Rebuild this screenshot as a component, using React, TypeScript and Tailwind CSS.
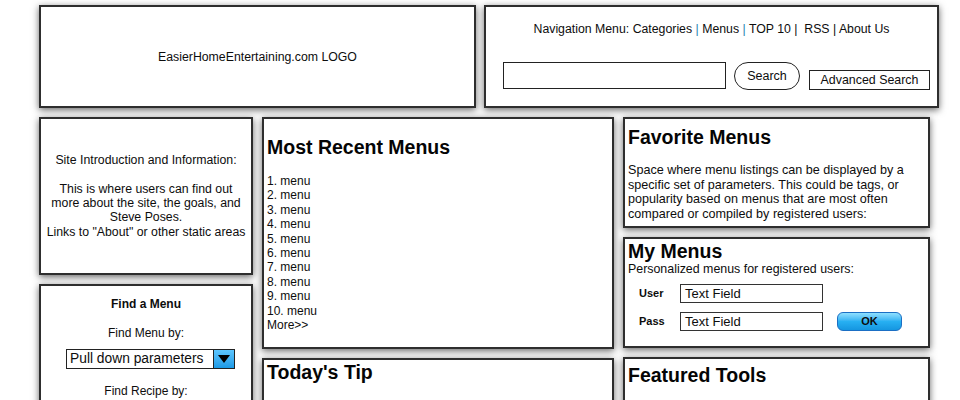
import React from "react";

const box =
  "bg-white border-2 border-[#2e2e2e] shadow-[0_2px_7px_rgba(0,0,0,0.6)]";

const heading = "font-bold text-[19.5px] leading-[20px] text-[#050505]";

export default function App() {
  const items = Array.from({ length: 10 }, (_, i) => `${i + 1}. menu`);
  return (
    <div
      className="w-[960px] h-[400px] overflow-hidden bg-white text-[#0d0d0d]"
      style={{ fontFamily: '"Liberation Sans", Arial, sans-serif' }}
    >
      <div className="pl-[39px] pt-[5px]">
        {/* Top row */}
        <div className="flex gap-[8px]">
          <div
            className={`${box} w-[437px] h-[103px] flex items-center justify-center text-[12.3px] pt-[1px]`}
          >
            EasierHomeEntertaining.com LOGO
          </div>
          <div className={`${box} w-[455px] h-[103px] flex flex-col`}>
            <div className="pt-[14px] text-[12.3px] leading-[16px] text-center">
              Navigation Menu: Categories{" "}
              <span className="text-[#2a7fb0]">|</span> Menus{" "}
              <span className="text-[#2a7fb0]">|</span> TOP 10 |&nbsp; RSS |
              About Us
            </div>
            <div className="flex items-start mt-[25px] pl-[17px]">
              <div className="w-[223px] h-[27px] border-[1.5px] border-[#222] bg-white" />
              <div className="ml-[8px] w-[66px] h-[28px] rounded-full border-[1.5px] border-[#222] flex items-center justify-center text-[12.5px]">
                Search
              </div>
              <div className="ml-[9px] mt-[8px] w-[121px] h-[20px] border-[1.5px] border-[#222] flex items-center justify-center text-[12.4px]">
                Advanced Search
              </div>
            </div>
          </div>
        </div>

        {/* Main grid */}
        <div className="mt-[9px] grid grid-cols-[214px_352px_307px] gap-x-[9px] items-start">
          {/* Left column */}
          <div className="flex flex-col gap-[9px]">
            <div
              className={`${box} h-[158px] flex items-center justify-center text-center text-[12.3px] leading-[14.4px]`}
            >
              <div>
                Site Introduction and Information:
                <br />
                <br />
                This is where users can find out
                <br />
                more about the site, the goals, and
                <br />
                Steve Poses.
                <br />
                Links to "About" or other static areas
              </div>
            </div>
            <div className={`${box} h-[140px] pt-[11px] text-[12px] leading-[14.5px]`}>
              <div className="text-center font-bold">Find a Menu</div>
              <div className="text-center mt-[14.5px]">Find Menu by:</div>
              <div className="mt-[8px] ml-[25px] w-[169px] h-[20px] border-[1.5px] border-[#222] flex items-stretch">
                <div className="flex-1 flex items-center pl-[3px] text-[13.8px] leading-none">
                  Pull down parameters
                </div>
                <div className="w-[21px] bg-gradient-to-b from-[#5cc6ff] to-[#1a9ae6] border-l-[1.5px] border-[#222] flex items-center justify-center">
                  <svg width="12" height="8" viewBox="0 0 12 8">
                    <polygon points="0,0 12,0 6,8" fill="#000" />
                  </svg>
                </div>
              </div>
              <div className="text-center mt-[15px]">Find Recipe by:</div>
            </div>
          </div>

          {/* Middle column */}
          <div className="flex flex-col gap-[9px]">
            <div className={`${box} h-[232px] pt-[18px] pl-[3px]`}>
              <div className={heading}>Most Recent Menus</div>
              <div className="mt-[17px] text-[12px] leading-[14.4px]">
                {items.map((t) => (
                  <div key={t}>{t}</div>
                ))}
                <div>More&gt;&gt;</div>
              </div>
            </div>
            <div className={`${box} h-[120px] pt-[2px] pl-[3px]`}>
              <div className={heading}>Today's Tip</div>
            </div>
          </div>

          {/* Right column */}
          <div className="flex flex-col gap-[9px]">
            <div className={`${box} h-[111px] pt-[8px] pl-[3px]`}>
              <div className={heading}>Favorite Menus</div>
              <div className="mt-[16px] text-[12.6px] leading-[14.6px]">
                Space where menu listings can be displayed by a
                <br />
                specific set of parameters. This could be tags, or
                <br />
                popularity based on menus that are most often
                <br />
                compared or compiled by registered users:
              </div>
            </div>
            <div className={`${box} h-[111px] pt-[2px] pl-[3px]`}>
              <div className={heading}>My Menus</div>
              <div className="mt-[1px] text-[12.4px] leading-[14.5px]">
                Personalized menus for registered users:
              </div>
              <div className="mt-[7px] flex flex-col gap-[9px]">
                <div className="flex items-center">
                  <div className="w-[52px] pl-[11px] text-[11px] font-bold">User</div>
                  <div className="w-[143px] h-[19px] border-[1.5px] border-[#333] flex items-center pl-[4px] text-[13px] leading-none">
                    Text Field
                  </div>
                </div>
                <div className="flex items-center">
                  <div className="w-[52px] pl-[11px] text-[11px] font-bold">Pass</div>
                  <div className="w-[143px] h-[19px] border-[1.5px] border-[#333] flex items-center pl-[4px] text-[13px] leading-none">
                    Text Field
                  </div>
                  <div className="ml-[14px] w-[65px] h-[19px] rounded-[6px] border border-[#1b6fc4] bg-gradient-to-b from-[#8ee0ff] via-[#27b0f2] to-[#1596e0] flex items-center justify-center text-[11px] font-bold leading-none">
                    OK
                  </div>
                </div>
              </div>
            </div>
            <div className={`${box} h-[120px] pt-[6px] pl-[3px]`}>
              <div className={heading}>Featured Tools</div>
            </div>
          </div>
        </div>
      </div>
    </div>
  );
}
